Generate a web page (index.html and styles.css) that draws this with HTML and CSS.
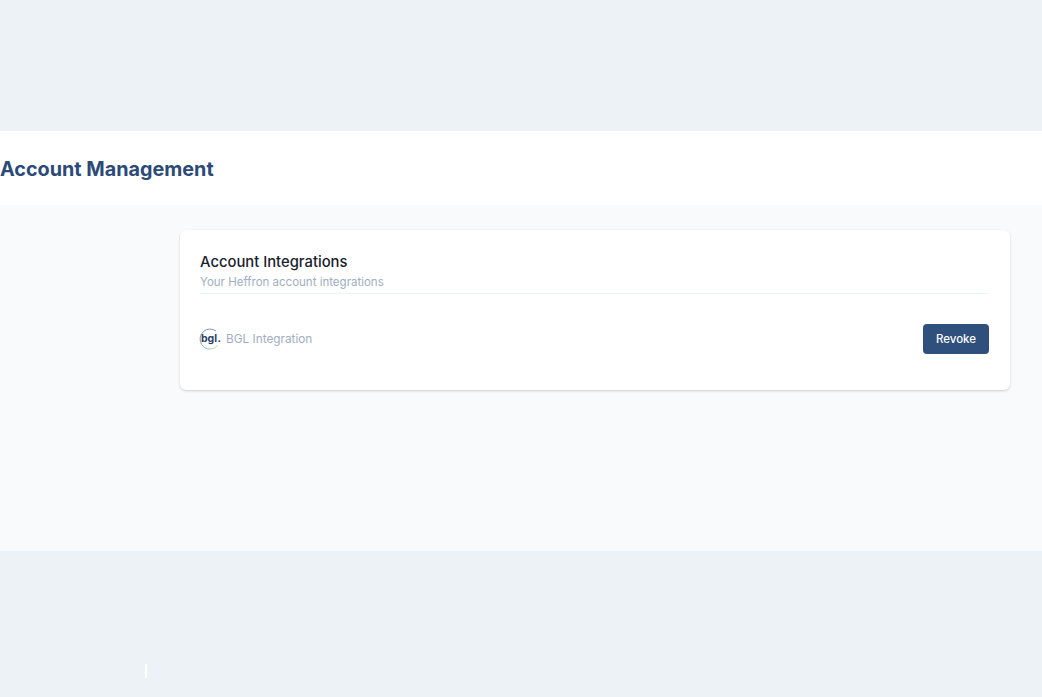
FILE: index.html
```html
<!DOCTYPE html>
<html lang="en">
<head>
<meta charset="utf-8">
<title>Account Management</title>
<link rel="stylesheet" href="styles.css">
</head>
<body>
<div class="top-band"></div>
<header class="page-header"><h1 class="page-title">Account Management</h1></header>
<main class="content">
  <section class="card">
    <h2 class="card-title">Account Integrations</h2>
    <p class="card-sub">Your Heffron account integrations</p>
    <div class="row">
      <div class="integration">
        <span class="logo">
          <svg class="logo-ring" width="22" height="22" viewBox="0 0 22 22" aria-hidden="true">
            <path d="M17 3A10 10 0 0 0 2.5 16.2" fill="none" stroke="#8497a8" stroke-width="1"/>
            <path d="M2.5 16.2A10 10 0 0 0 11 21" fill="none" stroke="#8cc8dd" stroke-width="1"/>
            <path d="M11 21a10 10 0 0 0 7.5-3.4" fill="none" stroke="#bddba8" stroke-width="1"/>
          </svg>
          <span class="logo-text">bgl<span class="logo-dot">.</span></span>
        </span>
        <span class="integration-name">BGL Integration</span>
      </div>
      <button class="btn" type="button">Revoke</button>
    </div>
  </section>
</main>
<footer class="bottom-band"><span class="caret"></span></footer>
</body>
</html>
```
FILE: styles.css
```css
* { box-sizing: border-box; }
html, body { margin: 0; height: 100%; }
body {
  font-family: Inter, "Liberation Sans", sans-serif;
  background: #edf2f7;
  height: 697px;
  overflow: hidden;
  display: flex;
  flex-direction: column;
}
.top-band { height: 131px; flex: none; }
.page-header {
  height: 74px;
  flex: none;
  background: #fff;
  display: flex;
  align-items: center;
}
.page-title {
  margin: 1px 0 0;
  font-size: 19.8px;
  line-height: 28px;
  font-weight: 700;
  color: #2c4a77;
}
.content {
  height: 346px;
  flex: none;
  background: #f9fafc;
  padding: 25px 32px 0 180px;
}
.card {
  height: 160px;
  background: #fff;
  border-radius: 6px;
  box-shadow: 0 1px 3px rgba(0,0,0,.12), 0 1px 2px rgba(0,0,0,.06);
  padding: 22px 21px 20px 20px;
}
.card-title {
  margin: 0;
  font-size: 14.8px;
  line-height: 20px;
  font-weight: 500;
  color: #1a202c;
}
.card-sub {
  margin: 0;
  padding-bottom: 1px;
  font-size: 11.5px;
  line-height: 20px;
  color: #a0aec0;
  border-bottom: 1px solid #edf2f7;
}
.row {
  margin-top: 30px;
  display: flex;
  justify-content: space-between;
  align-items: center;
}
.integration { display: flex; align-items: center; gap: 5px; margin-left: -1px; }
.logo {
  position: relative;
  width: 22px;
  height: 22px;
  display: flex;
  align-items: center;
  justify-content: center;
}
.logo-ring { position: absolute; inset: 0; }
.logo-text {
  position: relative;
  font-size: 10.5px;
  font-weight: 700;
  color: #2a3f5f;
  left: 1px;
  top: -1px;
}
.logo-dot { margin-left: .5px; }
.integration-name { font-size: 11.8px; color: #a0aec0; }
.btn {
  width: 66px;
  height: 30px;
  border: 0;
  border-radius: 4px;
  background: #2f4f7c;
  color: #fff;
  font: 500 11.5px Inter, "Liberation Sans", sans-serif;
  padding: 0;
}
.bottom-band { flex: 1; position: relative; }
.caret {
  position: absolute;
  left: 145px;
  top: 113px;
  width: 2px;
  height: 14px;
  background: #fff;
}
```
